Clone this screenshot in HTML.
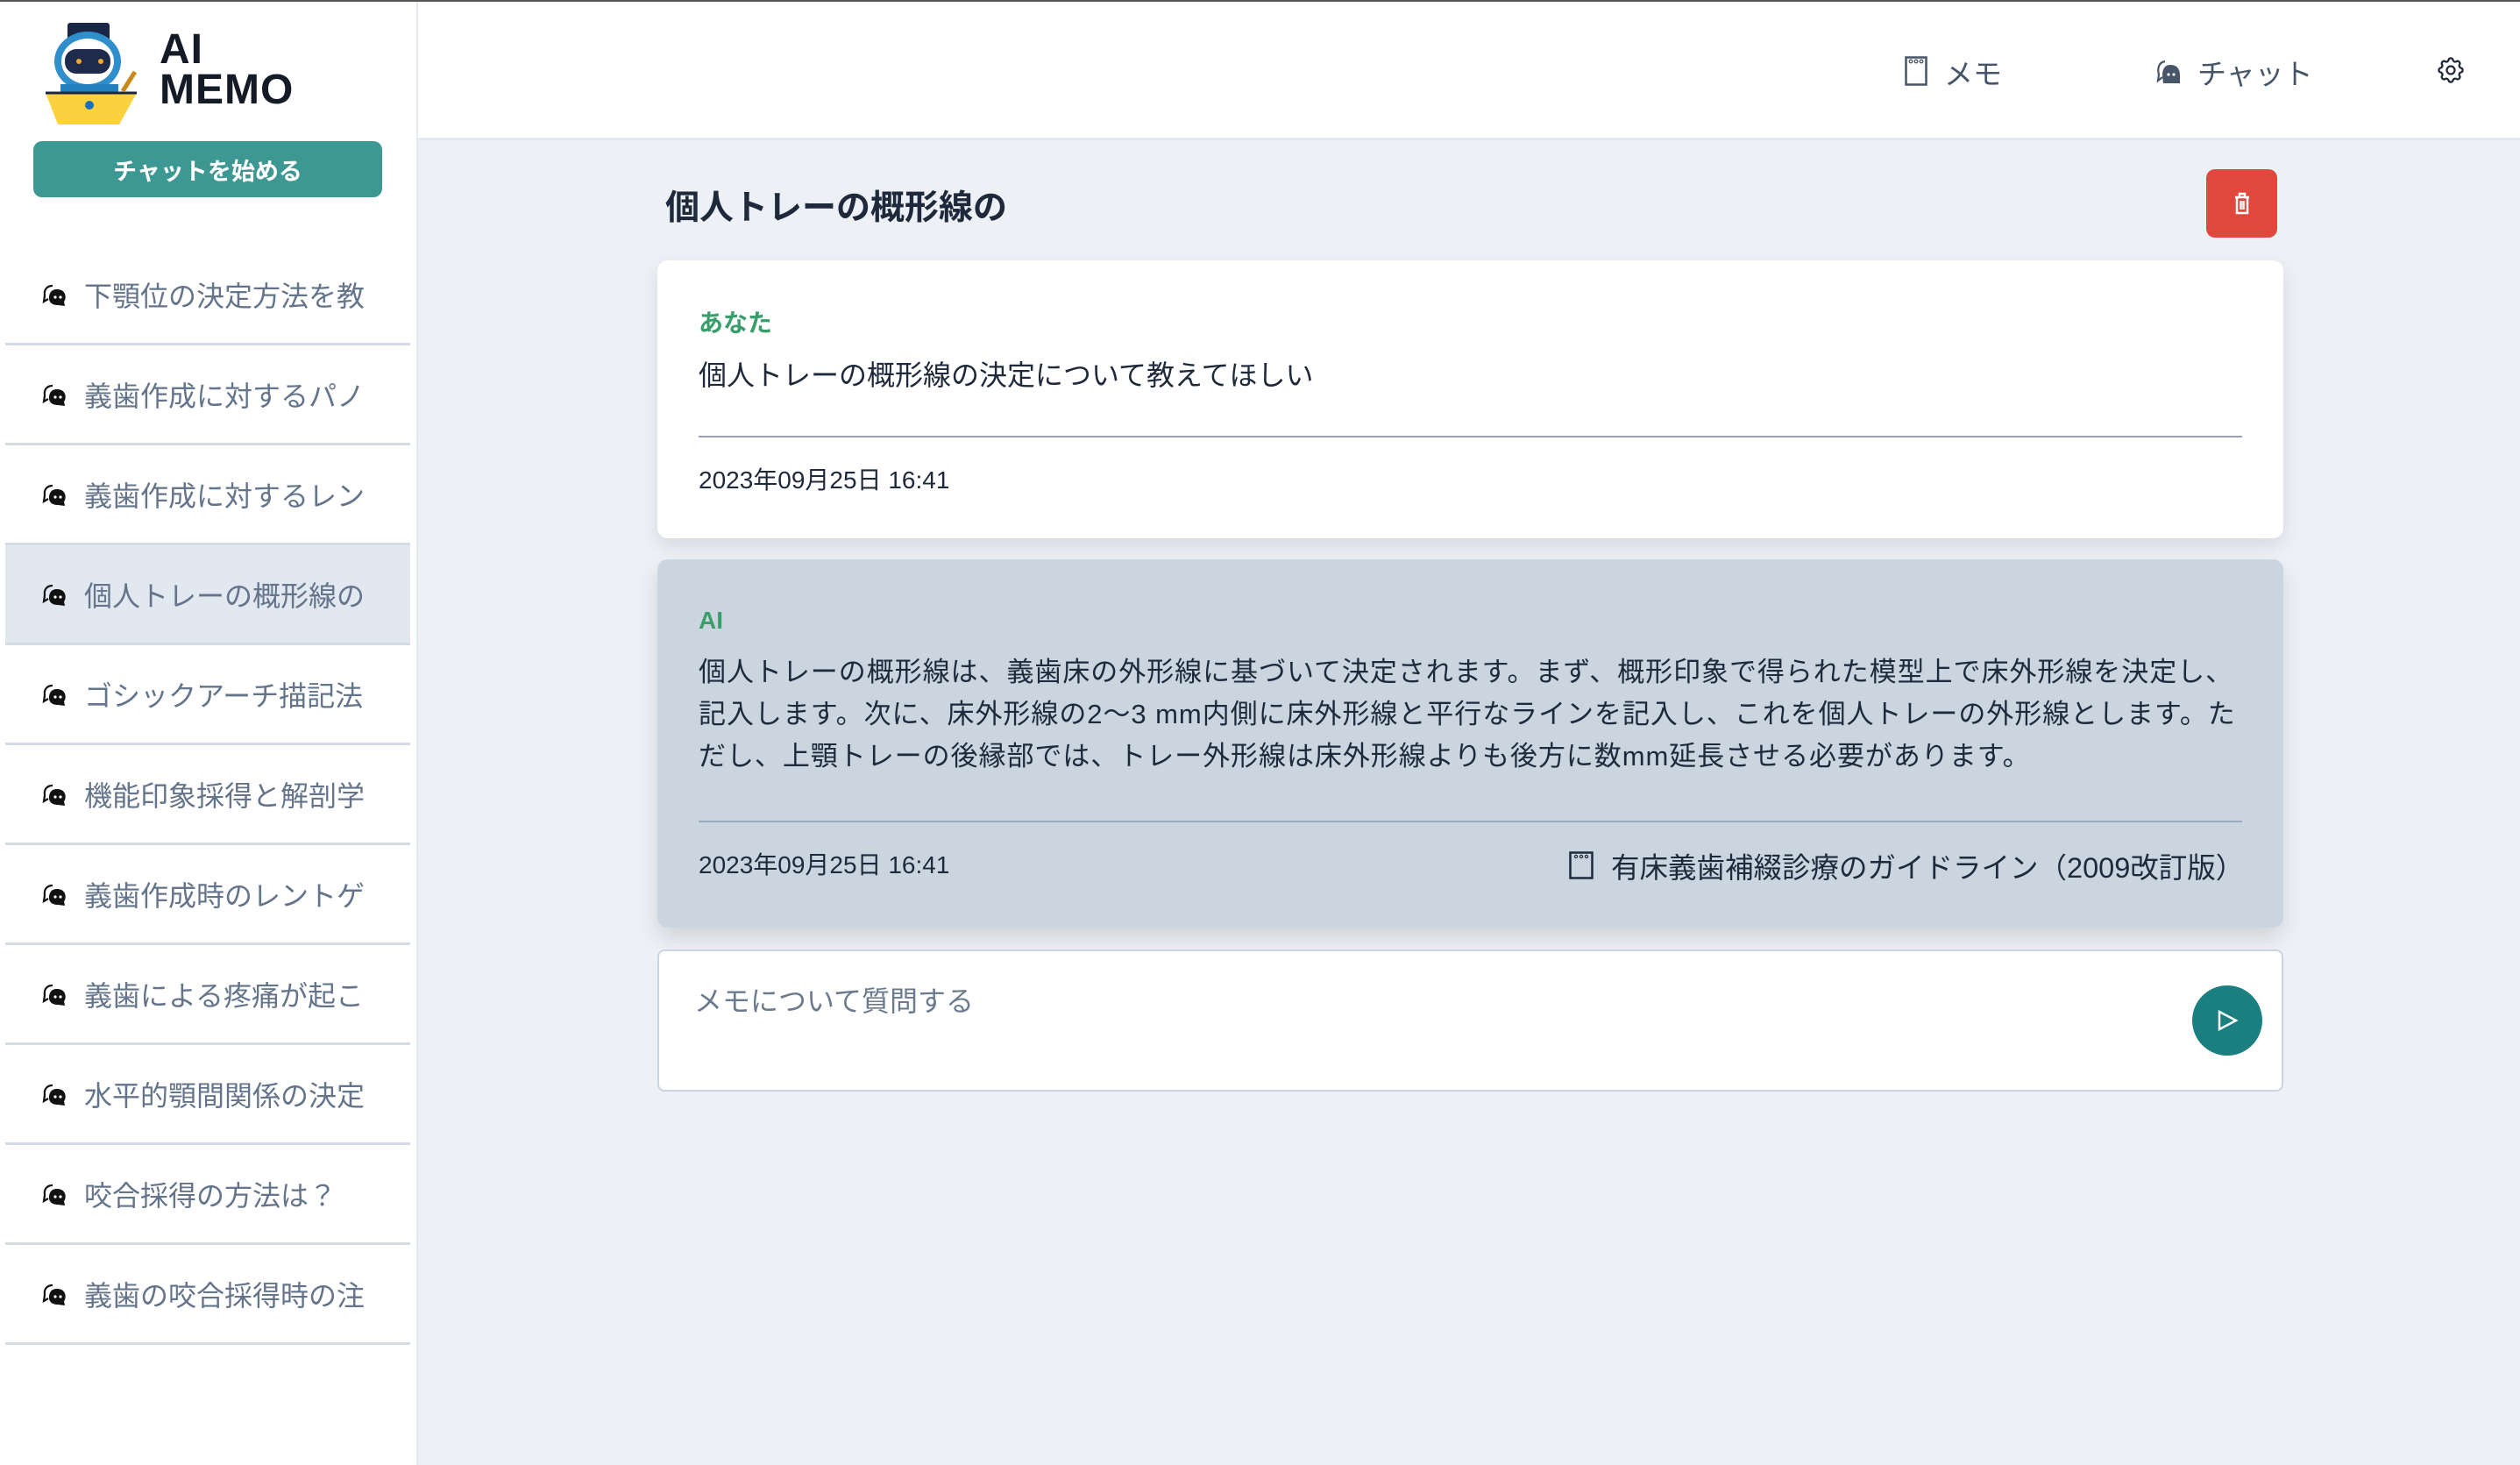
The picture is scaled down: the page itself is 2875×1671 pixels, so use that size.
<!DOCTYPE html>
<html><head><meta charset="utf-8"><style>
*{margin:0;padding:0;box-sizing:border-box}
body{width:2875px;height:1671px;overflow:hidden;background:#edf1f5;font-family:"Liberation Sans","Noto Sans CJK JP",sans-serif;position:relative;color:#1e293b}
.abs{position:absolute}
#top{left:0;top:0;width:2875px;height:2px;background:#555}
#side{left:0;top:2px;width:477px;height:1669px;background:#fff;border-right:2px solid #e5e9ef}
#hdr{left:477px;top:2px;width:2398px;height:158px;background:#fff;border-bottom:3px solid #e2e8f0}
.item{position:absolute;left:6px;width:462px;height:114px;border-bottom:3px solid #d3dbe5;display:flex;align-items:center;padding-left:90px;font-size:32px;color:#64748b;white-space:nowrap}
.item svg{position:absolute;left:42px;top:44px}
.item.sel{background:#e2e8f0}
.card{position:absolute;left:750px;width:1855px;border-radius:12px}
</style></head><body>
<div id="top" class="abs"></div>
<div id="side" class="abs">
 <svg class="abs" style="left:52px;top:22px" width="104" height="120" viewBox="0 0 104 120">
  <rect x="25" y="2" width="48" height="26" rx="3" fill="#1a2744"/>
  <ellipse cx="48" cy="46" rx="38" ry="34" fill="#2e8fcc"/>
  <ellipse cx="48" cy="46" rx="30" ry="26" fill="#fff"/>
  <rect x="22" y="32" width="52" height="28" rx="13" fill="#1f2b4d"/>
  <circle cx="38" cy="46" r="3" fill="#f0a830"/><circle cx="63" cy="46" r="3" fill="#f0a830"/>
  <rect x="17" y="72" width="66" height="30" fill="#2380c0"/>
  <path d="M0 82 L104 82 L84 118 L14 118 Z" fill="#fcd13e"/>
  <path d="M0 82 L104 82" stroke="#1a2744" stroke-width="3"/>
  <circle cx="50" cy="96" r="5" fill="#1a70c0"/>
  <path d="M88 80 L102 58" stroke="#c98a1a" stroke-width="5"/>
 </svg>
 <div class="abs" style="left:182px;top:32px;font-size:48px;line-height:46px;font-weight:bold;color:#151b26;letter-spacing:1px">AI<br>MEMO</div>
 <div class="abs" style="left:38px;top:159px;width:398px;height:64px;background:#3d9793;border-radius:10px;color:#fff;font-size:27px;font-weight:bold;display:flex;align-items:center;justify-content:center">チャットを始める</div>
</div>

<div class="item" style="top:280px"><svg width="30" height="26" viewBox="0 0 30 26"><path d="M12 2C5 2 2 7 3 13L2 20 7 17" fill="none" stroke="#111" stroke-width="2.2"/><path d="M17 6C10 6 8 11 8 16C8 22 13 24 18 24L26 25 25 20C28 17 28 6 17 6Z" fill="#111"/><circle cx="15" cy="15" r="1.6" fill="#fff"/><circle cx="21" cy="15" r="1.6" fill="#fff"/></svg>下顎位の決定方法を教</div>
<div class="item" style="top:394px"><svg width="30" height="26" viewBox="0 0 30 26"><path d="M12 2C5 2 2 7 3 13L2 20 7 17" fill="none" stroke="#111" stroke-width="2.2"/><path d="M17 6C10 6 8 11 8 16C8 22 13 24 18 24L26 25 25 20C28 17 28 6 17 6Z" fill="#111"/><circle cx="15" cy="15" r="1.6" fill="#fff"/><circle cx="21" cy="15" r="1.6" fill="#fff"/></svg>義歯作成に対するパノ</div>
<div class="item" style="top:508px"><svg width="30" height="26" viewBox="0 0 30 26"><path d="M12 2C5 2 2 7 3 13L2 20 7 17" fill="none" stroke="#111" stroke-width="2.2"/><path d="M17 6C10 6 8 11 8 16C8 22 13 24 18 24L26 25 25 20C28 17 28 6 17 6Z" fill="#111"/><circle cx="15" cy="15" r="1.6" fill="#fff"/><circle cx="21" cy="15" r="1.6" fill="#fff"/></svg>義歯作成に対するレン</div>
<div class="item sel" style="top:622px"><svg width="30" height="26" viewBox="0 0 30 26"><path d="M12 2C5 2 2 7 3 13L2 20 7 17" fill="none" stroke="#111" stroke-width="2.2"/><path d="M17 6C10 6 8 11 8 16C8 22 13 24 18 24L26 25 25 20C28 17 28 6 17 6Z" fill="#111"/><circle cx="15" cy="15" r="1.6" fill="#fff"/><circle cx="21" cy="15" r="1.6" fill="#fff"/></svg>個人トレーの概形線の</div>
<div class="item" style="top:736px"><svg width="30" height="26" viewBox="0 0 30 26"><path d="M12 2C5 2 2 7 3 13L2 20 7 17" fill="none" stroke="#111" stroke-width="2.2"/><path d="M17 6C10 6 8 11 8 16C8 22 13 24 18 24L26 25 25 20C28 17 28 6 17 6Z" fill="#111"/><circle cx="15" cy="15" r="1.6" fill="#fff"/><circle cx="21" cy="15" r="1.6" fill="#fff"/></svg>ゴシックアーチ描記法</div>
<div class="item" style="top:850px"><svg width="30" height="26" viewBox="0 0 30 26"><path d="M12 2C5 2 2 7 3 13L2 20 7 17" fill="none" stroke="#111" stroke-width="2.2"/><path d="M17 6C10 6 8 11 8 16C8 22 13 24 18 24L26 25 25 20C28 17 28 6 17 6Z" fill="#111"/><circle cx="15" cy="15" r="1.6" fill="#fff"/><circle cx="21" cy="15" r="1.6" fill="#fff"/></svg>機能印象採得と解剖学</div>
<div class="item" style="top:964px"><svg width="30" height="26" viewBox="0 0 30 26"><path d="M12 2C5 2 2 7 3 13L2 20 7 17" fill="none" stroke="#111" stroke-width="2.2"/><path d="M17 6C10 6 8 11 8 16C8 22 13 24 18 24L26 25 25 20C28 17 28 6 17 6Z" fill="#111"/><circle cx="15" cy="15" r="1.6" fill="#fff"/><circle cx="21" cy="15" r="1.6" fill="#fff"/></svg>義歯作成時のレントゲ</div>
<div class="item" style="top:1078px"><svg width="30" height="26" viewBox="0 0 30 26"><path d="M12 2C5 2 2 7 3 13L2 20 7 17" fill="none" stroke="#111" stroke-width="2.2"/><path d="M17 6C10 6 8 11 8 16C8 22 13 24 18 24L26 25 25 20C28 17 28 6 17 6Z" fill="#111"/><circle cx="15" cy="15" r="1.6" fill="#fff"/><circle cx="21" cy="15" r="1.6" fill="#fff"/></svg>義歯による疼痛が起こ</div>
<div class="item" style="top:1192px"><svg width="30" height="26" viewBox="0 0 30 26"><path d="M12 2C5 2 2 7 3 13L2 20 7 17" fill="none" stroke="#111" stroke-width="2.2"/><path d="M17 6C10 6 8 11 8 16C8 22 13 24 18 24L26 25 25 20C28 17 28 6 17 6Z" fill="#111"/><circle cx="15" cy="15" r="1.6" fill="#fff"/><circle cx="21" cy="15" r="1.6" fill="#fff"/></svg>水平的顎間関係の決定</div>
<div class="item" style="top:1306px"><svg width="30" height="26" viewBox="0 0 30 26"><path d="M12 2C5 2 2 7 3 13L2 20 7 17" fill="none" stroke="#111" stroke-width="2.2"/><path d="M17 6C10 6 8 11 8 16C8 22 13 24 18 24L26 25 25 20C28 17 28 6 17 6Z" fill="#111"/><circle cx="15" cy="15" r="1.6" fill="#fff"/><circle cx="21" cy="15" r="1.6" fill="#fff"/></svg>咬合採得の方法は？</div>
<div class="item" style="top:1420px"><svg width="30" height="26" viewBox="0 0 30 26"><path d="M12 2C5 2 2 7 3 13L2 20 7 17" fill="none" stroke="#111" stroke-width="2.2"/><path d="M17 6C10 6 8 11 8 16C8 22 13 24 18 24L26 25 25 20C28 17 28 6 17 6Z" fill="#111"/><circle cx="15" cy="15" r="1.6" fill="#fff"/><circle cx="21" cy="15" r="1.6" fill="#fff"/></svg>義歯の咬合採得時の注</div>

<div id="hdr" class="abs">
 <svg class="abs" style="left:1696px;top:62px" width="26" height="34" viewBox="0 0 26 34"><rect x="1.5" y="1.5" width="23" height="31" fill="none" stroke="#475569" stroke-width="2.5"/><circle cx="7" cy="6" r="1.8" fill="none" stroke="#475569" stroke-width="1.3"/><circle cx="13" cy="6" r="1.8" fill="none" stroke="#475569" stroke-width="1.3"/><circle cx="19" cy="6" r="1.8" fill="none" stroke="#475569" stroke-width="1.3"/></svg>
 <div class="abs" style="left:1741px;top:56px;font-size:33px;color:#475569">メモ</div>
 <svg class="abs" style="left:1982px;top:66px" width="30" height="28" viewBox="0 0 30 28"><path d="M11 2C4 3 2 10 4 17L3 24 8 20" fill="none" stroke="#475569" stroke-width="2.2"/><path d="M17 6C10 6 8 12 8 18L9 27 28 27 28 18C28 10 24 6 17 6Z" fill="#475569"/><circle cx="15" cy="17" r="1.6" fill="#fff"/><circle cx="21" cy="17" r="1.6" fill="#fff"/></svg>
 <div class="abs" style="left:2030px;top:56px;font-size:33px;color:#475569">チャット</div>
 <svg class="abs" style="left:2301px;top:60px" width="36" height="36" viewBox="0 0 24 24" fill="none" stroke="#1f2937" stroke-width="1.5"><path d="M10.3 4.3c.4-1.8 2.9-1.8 3.4 0a1.7 1.7 0 002.6 1.1c1.5-.9 3.3.8 2.4 2.4a1.7 1.7 0 001 2.5c1.8.4 1.8 2.9 0 3.4a1.7 1.7 0 00-1 2.6c.9 1.5-.8 3.300-2.4 2.4a1.7 1.7 0 00-2.6 1c-.4 1.8-2.9 1.8-3.4 0a1.7 1.7 0 00-2.5-1c-1.5.9-3.3-.8-2.4-2.4a1.7 1.7 0 00-1.1-2.6c-1.8-.4-1.8-2.9 0-3.4a1.7 1.7 0 001.1-2.5c-.9-1.5.8-3.3 2.4-2.4 1 .6 2.300.1 2.5-1.1z"/><circle cx="12" cy="12" r="3"/></svg>
</div>
<div class="abs" style="left:759px;top:206px;font-size:39px;font-weight:bold;color:#1e293b">個人トレーの概形線の</div>
<div class="abs" style="left:2517px;top:193px;width:81px;height:78px;background:#e0483e;border-radius:10px">
 <svg class="abs" style="left:30px;top:25px" width="22" height="28" viewBox="0 0 20 28" fill="none" stroke="#fff" stroke-width="2.5"><path d="M2 7h16M7 7V3h6v4M4 7v18h12V7M8.5 11v10M11.5 11v10"/></svg>
</div>
<div class="card" style="top:297px;height:317px;background:#fff;box-shadow:0 8px 20px rgba(0,0,0,.1)">
 <div class="abs" style="left:47px;top:50px;font-size:28px;font-weight:bold;color:#3a9e6a">あなた</div>
 <div class="abs" style="left:47px;top:106px;font-size:32px;color:#1e293b">個人トレーの概形線の決定について教えてほしい</div>
 <div class="abs" style="left:47px;top:200px;width:1761px;height:2px;background:#94a3b8"></div>
 <div class="abs" style="left:47px;top:229px;font-size:28px;color:#1e293b">2023年09月25日 16:41</div>
</div>
<div class="card" style="top:638px;height:420px;background:#cbd5e0;box-shadow:0 12px 24px rgba(0,0,0,.12)">
 <div class="abs" style="left:47px;top:54px;font-size:28px;font-weight:bold;color:#3a9e6a">AI</div>
 <div class="abs" style="left:47px;top:105px;width:1800px;font-size:31px;line-height:48px;color:#1e293b;letter-spacing:0.95px;white-space:nowrap">個人トレーの概形線は、義歯床の外形線に基づいて決定されます。まず、概形印象で得られた模型上で床外形線を決定し、<br>記入します。次に、床外形線の2〜3 mm内側に床外形線と平行なラインを記入し、これを個人トレーの外形線とします。た<br>だし、上顎トレーの後縁部では、トレー外形線は床外形線よりも後方に数mm延長させる必要があります。</div>
 <div class="abs" style="left:47px;top:298px;width:1761px;height:2px;background:#9aa9bb"></div>
 <div class="abs" style="left:47px;top:327px;font-size:28px;color:#1e293b">2023年09月25日 16:41</div>
 <svg class="abs" style="left:1040px;top:333px" width="28" height="32" viewBox="0 0 28 32"><rect x="1.5" y="1.5" width="25" height="29" fill="none" stroke="#1e293b" stroke-width="2.5"/><circle cx="8" cy="6" r="1.6" fill="none" stroke="#1e293b" stroke-width="1.2"/><circle cx="14" cy="6" r="1.6" fill="none" stroke="#1e293b" stroke-width="1.2"/><circle cx="20" cy="6" r="1.6" fill="none" stroke="#1e293b" stroke-width="1.2"/></svg>
 <div class="abs" style="left:1088px;top:326px;font-size:32.5px;color:#1e293b;white-space:nowrap">有床義歯補綴診療のガイドライン（2009改訂版）</div>
</div>
<div class="card" style="top:1083px;height:162px;background:#fff;border:2px solid #cbd5e1;border-radius:8px">
 <div class="abs" style="left:40px;top:32px;font-size:32px;color:#6b7a8d">メモについて質問する</div>
 <div class="abs" style="left:1749px;top:39px;width:80px;height:80px;border-radius:50%;background:#1a7f7e">
  <svg class="abs" style="left:27px;top:27px" width="26" height="26" viewBox="0 0 26 26" fill="none" stroke="#fff" stroke-width="2.5"><path d="M4 3 L23 13 L4 23 Z"/></svg>
 </div>
</div>
</body></html>
